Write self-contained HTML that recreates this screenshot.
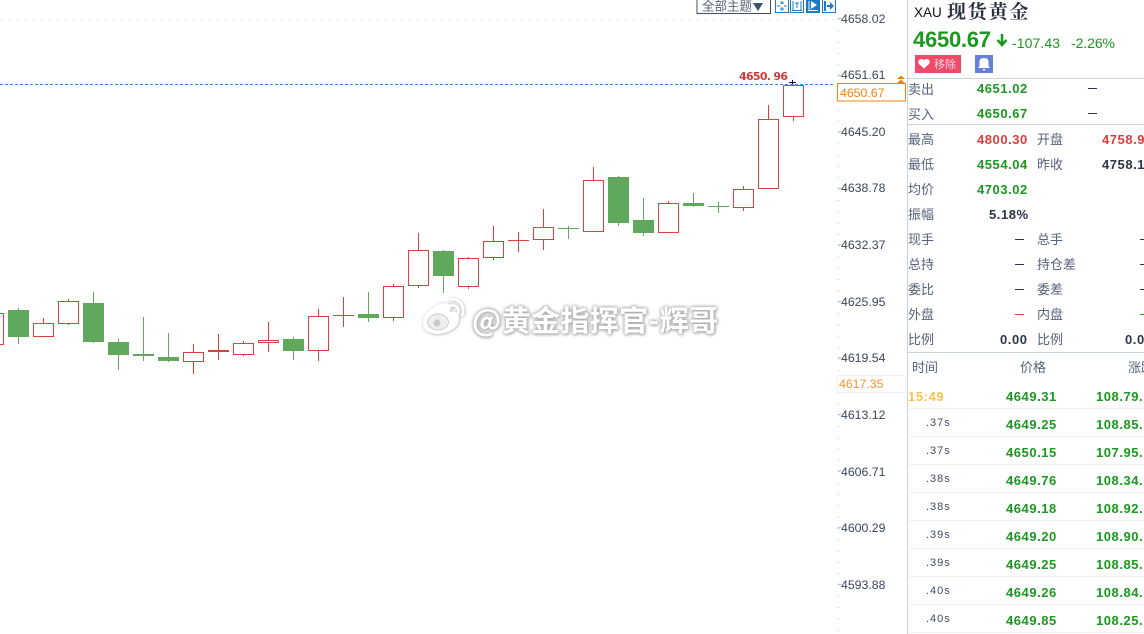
<!DOCTYPE html>
<html lang="zh"><head><meta charset="utf-8"><title>XAU</title>
<style>
html,body{margin:0;padding:0;background:#fff;width:1144px;height:634px;overflow:hidden}
svg{position:absolute;left:0;top:0;display:block}
.ax{font:12.3px "Liberation Sans",sans-serif;fill:#3a4658}
.l{font:13px "WenQuanYi Zen Hei","Noto Sans CJK SC",sans-serif;fill:#56627a}
.v{font:bold 13px "Liberation Sans",sans-serif;letter-spacing:.55px}
.gr{fill:#1b981f}.rd{fill:#e03c3c}.dk{fill:#2a3545}
.t{font:11px "Liberation Sans",sans-serif;fill:#3f4b60;letter-spacing:1px}
.w{stroke:#d9423f;fill:none}.wg{stroke:#60a85c;fill:none}
.br{fill:#fff;stroke:#d9423f}.bg{fill:#60a85c}
#wm{position:absolute;left:472px;top:300px;width:270px;font:bold 29px/38px "Noto Sans CJK SC","WenQuanYi Zen Hei",sans-serif;color:#fff;letter-spacing:.4px;white-space:nowrap;text-shadow:0 0 3px #aaa,0 0 4px #bbb,1px 1px 3px #aaa}
</style></head><body>
<svg width="1144" height="634" viewBox="0 0 1144 634" xmlns="http://www.w3.org/2000/svg">
<defs><filter id="sh" x="-20%" y="-20%" width="140%" height="140%"><feDropShadow dx="0.500" dy="0.500" stdDeviation="1.500" flood-color="#aaa"/></filter></defs>
<path d="M0 19.500H836" stroke="#f0f0f0" stroke-dasharray="4 4"/>
<path d="M838.500 19V634" stroke="#b5b5b5" stroke-dasharray="1 10.310"/>
<path d="M839.500 18V634" stroke="#b5b5b5" stroke-width="3" stroke-dasharray="1 55.570"/>
<path class="w" d="M43.500 318V337M68.500 299V325M193.500 344V374M218.500 334V360M243.500 341V356M268.500 322V352M318.500 309V361M343.500 297V327M393.500 284V321M418.500 233V288M468.500 257V289M493.500 226V260M518.500 232V252M543.500 209V250M593.500 167V232M668.500 201V233M743.500 186V211M768.500 105V189M793.500 84V121"/>
<path class="w" d="M333 315.500H354M508 240.500H529"/>
<rect class="br" x="-16.500" y="313.500" width="20" height="31"/>
<rect class="br" x="33.500" y="323.500" width="20" height="13"/>
<rect class="br" x="58.500" y="301.500" width="20" height="22"/>
<rect class="br" x="183.500" y="352.500" width="20" height="9"/>
<rect x="208" y="350" width="21" height="2" fill="#d9423f"/>
<rect class="br" x="233.500" y="343.500" width="20" height="11"/>
<rect class="br" x="258.500" y="340.500" width="20" height="2"/>
<rect class="br" x="308.500" y="316.500" width="20" height="34"/>
<rect class="br" x="383.500" y="286.500" width="20" height="31"/>
<rect class="br" x="408.500" y="250.500" width="20" height="35"/>
<rect class="br" x="458.500" y="258.500" width="20" height="28"/>
<rect class="br" x="483.500" y="241.500" width="20" height="16"/>
<rect class="br" x="533.500" y="227.500" width="20" height="12"/>
<rect class="br" x="583.500" y="180.500" width="20" height="51"/>
<rect class="br" x="658.500" y="203.500" width="20" height="29"/>
<rect class="br" x="733.500" y="189.500" width="20" height="18"/>
<rect class="br" x="758.500" y="119.500" width="20" height="69"/>
<rect class="br" x="783.500" y="85.500" width="20" height="31"/>
<path class="wg" d="M18.500 308V344M93.500 292V343M118.500 339V370M143.500 317V361M168.500 333V362M293.500 337V360M368.500 292V322M443.500 250V293M568.500 226V239M618.500 176V226M643.500 198V236M693.500 193V207M718.500 202V213"/>
<path class="wg" d="M558 228.500H579M708 206.500H729"/>
<rect class="bg" x="8" y="310" width="21" height="27"/>
<rect class="bg" x="83" y="303" width="21" height="39"/>
<rect class="bg" x="108" y="342" width="21" height="13"/>
<rect class="bg" x="133" y="354" width="21" height="2"/>
<rect class="bg" x="158" y="357" width="21" height="4"/>
<rect class="bg" x="283" y="339" width="21" height="12"/>
<rect class="bg" x="358" y="314" width="21" height="4"/>
<rect class="bg" x="433" y="251" width="21" height="25"/>
<rect class="bg" x="608" y="177" width="21" height="46"/>
<rect class="bg" x="633" y="220" width="21" height="13"/>
<rect class="bg" x="683" y="203" width="21" height="3"/>
<path d="M0 84.500H835" stroke="#1e90ff" stroke-dasharray="3 2"/>
<text x="739" y="80" font-family="'DejaVu Sans',sans-serif" font-weight="bold" font-size="11" fill="#d03c3c" textLength="49">4650. 96</text>
<path d="M789 82.500H796M792.500 80V84" stroke="#111" fill="none"/>
<rect x="697" y="-2" width="73.500" height="15.500" fill="#fff" stroke="#3c5070"/>
<text x="702" y="10.500" font-family="'Noto Sans CJK SC',sans-serif" font-size="12.500" fill="#56627a">全部主题</text>
<path d="M753 3H763L758 11Z" fill="#3c5070"/>
<g fill="#fff" stroke="#1a7cc4">
<rect x="775.500" y="-1" width="13" height="13.500"/>
<rect x="790.500" y="-1" width="13" height="13.500"/>
<rect x="806.500" y="-1" width="13" height="13.500" fill="#1a7cc4"/>
<rect x="822.500" y="-1" width="13" height="13.500"/>
</g>
<path d="M782 1V4M782 7V11M777 6H780M784 6H787M780 3H784M780 9H784" stroke="#1a7cc4" fill="none"/>
<path d="M793 1V10M801 1V10M792 10.500H802M795 3H799M797 3V8" stroke="#1a7cc4" fill="none"/>
<path d="M809 1V10.500H818" stroke="#fff" fill="none"/><path d="M811 1V9L817 5Z" fill="#fff"/>
<path d="M825 1V11" stroke="#1a7cc4" stroke-width="2"/><path d="M827 5H830V2L834 6L830 10V7H827Z" fill="#1a7cc4"/>
<g class="ax">
<text x="841" y="23">4658.02</text><text x="841" y="79">4651.61</text><text x="841" y="136">4645.20</text><text x="841" y="192">4638.78</text><text x="841" y="249">4632.37</text><text x="841" y="306">4625.95</text><text x="841" y="362">4619.54</text><text x="841" y="419">4613.12</text><text x="841" y="476">4606.71</text><text x="841" y="532">4600.29</text><text x="841" y="589">4593.88</text>
</g>
<rect x="837.500" y="83.500" width="68" height="17.500" fill="#fff" stroke="#f5820f"/>
<text x="840" y="97" font-family="'Liberation Sans',sans-serif" font-size="12.300" fill="#f5820f">4650.67</text>
<path d="M897 79H905L901 75.500ZM897 83H905L901 79.500Z" fill="#f5820f"/>
<rect x="837.500" y="375.500" width="68" height="17" fill="#fff" stroke="#eef0f4"/>
<text x="839" y="388" font-family="'Liberation Sans',sans-serif" font-size="12.300" fill="#f5962f">4617.35</text>
<path d="M907.500 0V634" stroke="#ccd2da"/>
<path d="M908 78.500H1144M908 124.500H1144M908 352.500H1144" stroke="#ccd2da"/>
<text x="914" y="17" font-family="'Liberation Sans',sans-serif" font-size="13.500" fill="#111">XAU</text>
<text x="947" y="18" font-family="'Noto Serif CJK SC',serif" font-weight="bold" font-size="19" fill="#2a3040" letter-spacing="1.800">现货黄金</text>
<text x="913" y="47" font-family="'Liberation Sans',sans-serif" font-weight="bold" font-size="22" fill="#1b981f" textLength="78">4650.67</text>
<path d="M1002 34V44M997.500 40L1002 45L1006.500 40" fill="none" stroke="#1b981f" stroke-width="2.500"/>
<text x="1012" y="48" font-family="'Liberation Sans',sans-serif" font-size="14" fill="#1b981f" textLength="48">-107.43</text>
<text x="1071" y="48" font-family="'Liberation Sans',sans-serif" font-size="14" fill="#1b981f" textLength="44">-2.26%</text>
<rect x="915" y="55" width="46" height="18" fill="#f04a6a"/>
<path d="M924 68.500L919 64C917 61 919.500 59 921.500 59C922.800 59 923.500 59.800 924 60.500C924.500 59.800 925.200 59 926.500 59C928.500 59 931 61 929 64Z" fill="#fff"/>
<text x="934" y="68" font-family="'Noto Sans CJK SC',sans-serif" font-size="11" fill="#ffd4de">移除</text>
<rect x="975" y="55" width="18" height="18" fill="#6480d8"/>
<path d="M984 58C980.500 58 979.500 60 979.500 62V66L978 68H990L988.500 66V62C988.500 60 987.500 58 984 58ZM982.500 69H985.500L984 71Z" fill="#fff"/>
<g class="l">
<text x="908" y="94">卖出</text><text x="908" y="119">买入</text><text x="908" y="144">最高</text><text x="908" y="169">最低</text><text x="908" y="194">均价</text><text x="908" y="219">振幅</text><text x="908" y="244">现手</text><text x="908" y="269">总持</text><text x="908" y="294">委比</text><text x="908" y="319">外盘</text><text x="908" y="344">比例</text>
<text x="1037" y="144">开盘</text><text x="1037" y="169">昨收</text><text x="1037" y="244">总手</text><text x="1037" y="269">持仓差</text><text x="1037" y="294">委差</text><text x="1037" y="319">内盘</text><text x="1037" y="344">比例</text>
<text x="912" y="372">时间</text><text x="1020" y="372">价格</text><text x="1128" y="372">涨跌</text>
</g>
<g class="v">
<text class="gr" x="977" y="93">4651.02</text><text class="gr" x="977" y="118">4650.67</text>
<text class="rd" x="977" y="144">4800.30</text><text class="gr" x="977" y="169">4554.04</text><text class="gr" x="977" y="194">4703.02</text>
<text class="dk" x="989" y="219">5.18%</text><text class="dk" x="1000" y="344">0.00</text>
<text class="rd" x="1102" y="144">4758.9</text><text class="dk" x="1102" y="169">4758.1</text><text class="dk" x="1125" y="344">0.00</text>
</g>
<path d="M1088 88.500H1097M1088 113.500H1097M1015 239.500H1024M1015 264.500H1024M1015 289.500H1024M1140 239.500H1144M1140 264.500H1144M1140 289.500H1144" stroke="#2a3545"/>
<path d="M1015 314.500H1024" stroke="#e03c3c"/><path d="M1140 314.500H1144" stroke="#1b981f"/>
<path d="M908 408.500H1144M908 436.500H1144M908 464.500H1144M908 492.500H1144M908 520.500H1144M908 548.500H1144M908 576.500H1144M908 604.500H1144M908 632.500H1144" stroke="#f1f2f4"/>
<text x="908" y="401" font-family="'Liberation Sans',sans-serif" font-weight="bold" font-size="13" fill="#ffc04d" letter-spacing=".6">15:49</text>
<g class="t">
<text x="926" y="426">.37s</text><text x="926" y="454">.37s</text><text x="926" y="482">.38s</text><text x="926" y="510">.38s</text><text x="926" y="538">.39s</text><text x="926" y="566">.39s</text><text x="926" y="594">.40s</text><text x="926" y="622">.40s</text>
</g>
<g class="v gr">
<text x="1006" y="401">4649.31</text><text x="1096" y="401">108.79.</text>
<text x="1006" y="429">4649.25</text><text x="1096" y="429">108.85.</text>
<text x="1006" y="457">4650.15</text><text x="1096" y="457">107.95.</text>
<text x="1006" y="485">4649.76</text><text x="1096" y="485">108.34.</text>
<text x="1006" y="513">4649.18</text><text x="1096" y="513">108.92.</text>
<text x="1006" y="541">4649.20</text><text x="1096" y="541">108.90.</text>
<text x="1006" y="569">4649.25</text><text x="1096" y="569">108.85.</text>
<text x="1006" y="597">4649.26</text><text x="1096" y="597">108.84.</text>
<text x="1006" y="625">4649.85</text><text x="1096" y="625">108.25.</text>
</g>
<g filter="url(#sh)">
<path fill="#fff" d="M423 323C423 313 436 303 446 303C452 304 451 309 450 312C456 310 460 314 459 319C459 328 447 334 438 334C429 334 423 330 423 323Z"/>
<ellipse cx="438" cy="322" rx="10.500" ry="8" fill="#eee" stroke="#ccc"/>
<circle cx="437" cy="323" r="3.500" fill="#c8c8c8"/>
<path d="M450 306C455 304 460 308 458 314M449 300C458 297 466 305 462 316" fill="none" stroke="#fff" stroke-width="2.500"/>
</g>
</svg>
<div id="wm">@黄金指挥官-辉哥</div>
</body></html>
